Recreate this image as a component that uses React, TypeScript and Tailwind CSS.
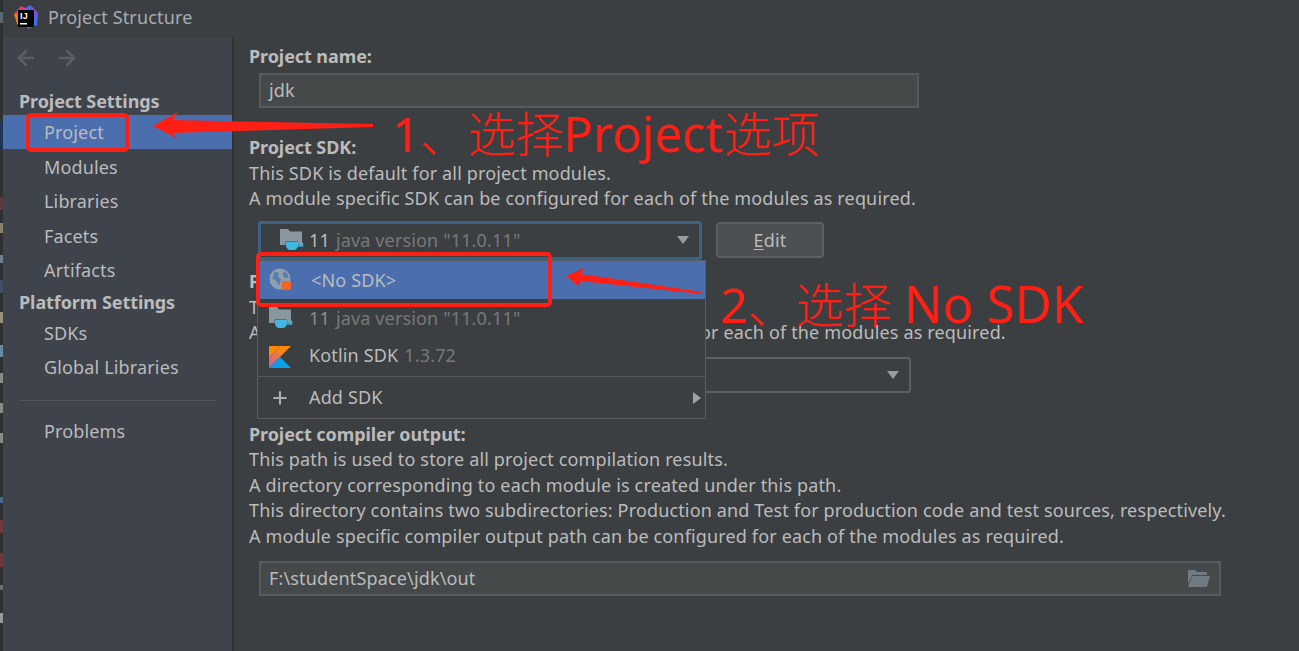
import React from "react";
import { ArrowLeft, ArrowRight, Plus } from "lucide-react";

const FolderCup = () => (
  <svg width="24" height="24" viewBox="0 0 24 24">
    <path d="M0 1h8l2 2.500h12V17H0z" fill="#8a979f" />
    <path d="M6 14h12v3.500c0 2.500-2 4.500-4.500 4.500h-3C8 22 6 20 6 17.500z" fill="#40b6e0" stroke="#3c3f41" strokeWidth="1" paintOrder="stroke" />
    <path d="M18 15.500h4.500v2.500H18" fill="none" stroke="#40b6e0" strokeWidth="1.400" />
  </svg>
);

const GlobeIcon = () => (
  <svg width="24" height="24" viewBox="0 0 24 24">
    <circle cx="11" cy="11" r="10.500" fill="#8fa0ac" />
    <path d="M6 3.500l4 1.500-1 3.500 3 3-2 6-3-5-4-2z M14.500 3l4 2.500 1 4-3.500.5-2-2.500z" fill="#5a7cb0" />
    <rect x="13" y="13" width="9" height="9" fill="#f26522" />
  </svg>
);

const KotlinIcon = () => (
  <svg width="22" height="22" viewBox="0 0 22 22">
    <defs>
      <linearGradient id="kotlinLow" x1="0" y1="1" x2="0.700" y2="0.300">
        <stop offset="0" stopColor="#c757bc" />
        <stop offset="1" stopColor="#f88909" />
      </linearGradient>
    </defs>
    <path d="M0 0h11L0 11.500z" fill="#f88909" />
    <path d="M11 0h11L0 22V11.500z" fill="url(#kotlinLow)" />
    <path d="M11 11l11 11H0z" fill="#0d9ee8" />
  </svg>
);

const IdeaLogo = () => (
  <svg width="24" height="24" viewBox="0 0 24 24" className="mr-[10px]">
    <path d="M0 9l7-8 7 3-9 16z" fill="#f4307f" />
    <path d="M12 3l4-3 8 8-1 12-9 4-3-10z" fill="#3f6fe8" />
    <path d="M0 9l3 10 6 2-5-12z" fill="#f97a12" />
    <path d="M16 0l8 8-4 6z" fill="#7c4be0" />
    <rect x="4" y="5" width="16" height="17" fill="#000000" />
    <text x="6" y="14" fontSize="9" fontWeight="700" fill="#ffffff" fontFamily="'Liberation Sans', sans-serif">IJ</text>
    <rect x="6" y="18" width="7" height="1.500" fill="#ffffff" />
  </svg>
);

const FolderOpen = () => (
  <svg width="24" height="18" viewBox="0 0 24 18">
    <path d="M1 0h7l2 2h10v3H5L1 14z" fill="#6e7b82" />
    <path d="M5 6h18l-3 11H1z" fill="#6e7b82" />
  </svg>
);

const Caret = () => (
  <span className="block h-0 w-0 border-x-[6.5px] border-t-[8px] border-x-transparent border-t-[#9a9c9e]" />
);

const navTop = ["Project", "Modules", "Libraries", "Facets", "Artifacts"];

const NavRow = ({ label, active }: { label: string; active?: boolean }) => (
  <div className={`flex h-[34.4px] items-center pl-[41px] ${active ? "mb-px bg-[#4b6eaf]" : ""}`}>{label}</div>
);

const Field = ({ children, className }: { children: React.ReactNode; className: string }) => (
  <div className={`flex h-[35px] items-center justify-between border-2 border-[#565a5c] bg-[#45494a] pl-[8px] ${className}`}>
    {children}
  </div>
);

const App: React.FC = () => {
  return (
    <div className="relative h-[651px] w-[1299px] overflow-hidden bg-[#3c3f41] font-['Noto_Sans','Noto_Sans_CJK_SC',sans-serif] text-[18px] leading-[25px] tracking-[0.15px] text-[#bbbbbb]">
      <div className="flex h-full">
        {/* bit of the window behind, left edge */}
        <div className="flex w-[3px] shrink-0 flex-col bg-[#2f3031]">
          <div className="mt-[12px] h-[11px] bg-[#5a6670]" />
          <div className="mt-[99px] h-[27px] bg-[#1c3658]" />
          <div className="mt-[48px] h-[13px] bg-[#5a3a3a]" />
          <div className="mt-[13px] h-[10px] bg-[#8c8270]" />
          <div className="mt-[22px] h-[8px] bg-[#6f8090]" />
          <div className="mt-[17px] h-[13px] bg-[#3f4f66]" />
          <div className="mt-[19px] h-[11px] bg-[#9a9080]" />
          <div className="mt-[22px] h-[12px] bg-[#6a8aa0]" />
          <div className="mt-[16px] h-[10px] bg-[#8a8a86]" />
          <div className="mt-[20px] h-[10px] bg-[#8a8a86]" />
          <div className="mt-[20px] h-[10px] bg-[#8a8a86]" />
          <div className="mt-[54px] h-[6px] bg-[#4a6a90]" />
          <div className="mt-[17px] h-[13px] bg-[#6c3a3a]" />
          <div className="mt-[20px] h-[14px] bg-[#6c3a3a]" />
          <div className="mt-[18px] h-[5px] bg-[#707070]" />
          <div className="mt-[23px] h-[10px] bg-[#9a9a9a]" />
        </div>

        <div className="flex min-w-0 flex-1 flex-col">
          <div className="flex h-[37px] shrink-0 items-center pb-[3px] pl-[11px] text-[#a5acb1]">
            <IdeaLogo />
            Project Structure
          </div>

          <div className="flex flex-1">
            <aside className="w-[229px] shrink-0 bg-[#3e434c]">
              <div className="flex h-[47px] items-center gap-[17px] pb-[6px] pl-[11px] text-[#5b5e60]">
                <ArrowLeft size={24} strokeWidth={2.6} />
                <ArrowRight size={24} strokeWidth={2.6} />
              </div>
              <div className="flex h-[31px] items-center pl-[16px] pt-[3px] font-bold tracking-[-0.08px]">Project Settings</div>
              {navTop.map((item) => (
                <NavRow key={item} label={item} active={item === "Project"} />
              ))}
              <div className="flex h-[28.4px] items-center pl-[16px] pt-[1px] font-bold tracking-[-0.08px]">Platform Settings</div>
              <NavRow label="SDKs" />
              <NavRow label="Global Libraries" />
              <div className="mx-[16px] mb-[13px] mt-[15px] h-px bg-[#50535a]" />
              <NavRow label="Problems" />
            </aside>

            <main className="flex-1 border-l-2 border-[#323232] pl-[15px] pt-[7px]">
              <div className="h-[26px] font-bold tracking-[-0.08px]">Project name:</div>
              <Field className="ml-[10px] mt-[3px] w-[660px]">jdk</Field>

              <div className="mt-[27px] h-[26px] font-bold tracking-[-0.08px]">Project SDK:</div>
              <p>This SDK is default for all project modules.</p>
              <p>A module specific SDK can be configured for each of the modules as required.</p>

              <div className="mt-[10px] flex h-[38px] items-center">
                <div className="ml-[9px] flex h-[39px] w-[444px] items-center rounded-[3px] border-[3px] border-[#3d6185] bg-[#3c3f41] pl-[19px] pr-[10px]">
                  <span className="mr-[5px] h-[24px]">
                    <FolderCup />
                  </span>
                  <span>11</span>
                  <span className="ml-[6px] text-[#787878]">java version "11.0.11"</span>
                  <span className="ml-auto">
                    <Caret />
                  </span>
                </div>
                <button className="ml-[14px] h-[36px] w-[108px] rounded-[4px] border-2 border-[#5e6060] bg-[#4c5052] text-[#bbbbbb]">
                  <span className="underline underline-offset-2">E</span>dit
                </button>
              </div>

              <div className="mt-[10px] h-[26px] font-bold tracking-[-0.08px]">Project language level:</div>
              <p>This language level is default for all project modules.</p>
              <p>A module specific language level can be configured for each of the modules as required.</p>

              <div className="ml-[10px] mt-[12px] flex h-[36px] w-[652px] items-center justify-end rounded-[3px] border-2 border-[#5e6060] pr-[10px]">
                <Caret />
              </div>

              <div className="mt-[29px] h-[25px] font-bold tracking-[-0.08px]">Project compiler output:</div>
              <div className="leading-[25.6px]">
                <p>This path is used to store all project compilation results.</p>
                <p>A directory corresponding to each module is created under this path.</p>
                <p>This directory contains two subdirectories: Production and Test for production code and test sources, respectively.</p>
                <p>A module specific compiler output path can be configured for each of the modules as required.</p>
              </div>

              <Field className="ml-[10px] mt-[12px] w-[962px] pr-[8px]">
                F:\studentSpace\jdk\out
                <FolderOpen />
              </Field>
            </main>
          </div>
        </div>
      </div>

      {/* SDK dropdown, open over the form */}
      <div className="absolute left-[257px] top-[260px] w-[449px] border border-[#5a5c5e] bg-[#3c3f41]">
        <div className="flex h-[38px] items-center bg-[#4b6eaf] pl-[11px] text-[#bbbbbb]">
          <GlobeIcon />
          <span className="ml-[18px]">&lt;No SDK&gt;</span>
        </div>
        <div className="flex h-[38px] items-center pl-[11px]">
          <FolderCup />
          <span className="ml-[16px] text-[#8c8c8c]">11</span>
          <span className="ml-[6px] text-[#787878]">java version "11.0.11"</span>
        </div>
        <div className="flex h-[39px] items-center pl-[11px]">
          <KotlinIcon />
          <div className="ml-[18px] flex pb-[3px]">
            <span>Kotlin SDK</span>
            <span className="ml-[6px] text-[#787878]">1.3.72</span>
          </div>
        </div>
        <div className="h-px bg-[#555758]" />
        <div className="flex h-[41px] items-center pl-[12px]">
          <Plus size={20} strokeWidth={2.6} className="text-[#a9acae]" />
          <span className="ml-[19px]">Add SDK</span>
          <span className="ml-auto mr-[4px] h-0 w-0 border-y-[6px] border-l-[8px] border-y-transparent border-l-[#a0a2a4]" />
        </div>
      </div>

      {/* red annotations drawn over the screenshot */}
      <div className="absolute left-[26px] top-[113px] h-[39px] w-[103px] rounded-[5px] border-4 border-[#ff1f14]" />
      <div className="absolute left-[256px] top-[252px] h-[55px] w-[296px] rounded-[5px] border-4 border-[#ff1f14]" />
      <svg className="absolute left-0 top-0" width="1299" height="651">
        <polygon points="153,126 178,112 172,120 373,124 373,127 172,133 178,139" fill="#ff1f14" />
        <polygon points="566,276 584,268 581,274 702,292 702,294 580,281 580,287" fill="#ff1f14" />
      </svg>
      <div className="absolute left-[392px] top-[101px] whitespace-nowrap text-[48px] font-light leading-[64px] tracking-normal text-[#ff1f14]">
        <span className="font-normal">1</span>、选择<span className="text-[49px] font-normal">Project</span>选项
      </div>
      <div className="absolute left-[720px] top-[271px] whitespace-nowrap text-[48px] font-light leading-[64px] tracking-normal text-[#ff1f14]">
        <span className="font-normal">2</span>、选择 <span className="text-[51px] font-normal">No SDK</span>
      </div>
    </div>
  );
};

export default App;
